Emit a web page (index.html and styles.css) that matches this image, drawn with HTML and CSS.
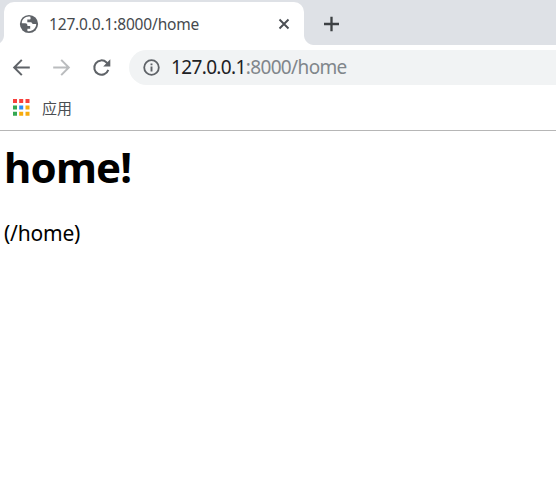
FILE: index.html
```html
<!DOCTYPE html>
<html lang="zh-CN">
<head>
<meta charset="utf-8">
<title>127.0.0.1:8000/home</title>
<link rel="stylesheet" href="styles.css">
</head>
<body>
<header class="tabstrip">
  <div class="tab">
    <svg class="globe" width="20" height="20" viewBox="0 0 20 20"><circle cx="10" cy="10" r="9.1" fill="#5f6368"/><path d="M11.4 2.8c-4.4-1.1-8.6 2.3-8.6 6.5h3.4c1.4 0 2.2.8 2.2 2v.7h2.8v2.7H8.4v2.3c4.7 1 8.8-2.6 8.8-7h-2.5c-1.2 0-1.9-.7-2.3-1.8H8.3V5.6h2.2c.8 0 1.1-.5 1.1-1.2z" fill="#fff"/></svg>
    <span class="title">127.0.0.1:8000/home</span>
    <svg class="close" width="12" height="12" viewBox="0 0 12 12"><path d="M1.5 1.5l9 9M10.5 1.5l-9 9" stroke="#4b4f54" stroke-width="1.9"/></svg>
  </div>
  <svg class="plus" width="16" height="16" viewBox="0 0 16 16"><path d="M8.5 .8v14.4M1 8h15" stroke="#3c4043" stroke-width="2.3"/></svg>
</header>
<nav class="toolbar">
  <svg class="back" width="20" height="20" viewBox="0 0 20 20"><path d="M18.8 9.5H3.4M10.8 1.9L3.2 9.5l7.6 7.6" fill="none" stroke="#5f6368" stroke-width="2"/></svg>
  <svg class="forward" width="20" height="20" viewBox="0 0 20 20"><path d="M2.2 9.5H17.4M10.2 1.9l7.6 7.6-7.6 7.6" fill="none" stroke="#babcbe" stroke-width="2"/></svg>
  <svg class="reload" width="20" height="20" viewBox="0 0 20 20"><path d="M17.3 11.9A7.2 7.2 0 1 1 15.6 4.5l1.4 1.4" fill="none" stroke="#5f6368" stroke-width="2"/><path d="M19.3 1.3v7.1h-7.1z" fill="#5f6368"/></svg>
  <div class="omnibox">
    <svg class="info" width="18" height="18" viewBox="0 0 18 18"><circle cx="8.5" cy="8.5" r="7.3" fill="none" stroke="#5f6368" stroke-width="1.8"/><path d="M8.5 7.5v5M8.5 4.4v1.9" stroke="#5f6368" stroke-width="1.9"/></svg>
    <span class="url"><b>127.0.0.1</b>:8000/home</span>
  </div>
</nav>
<nav class="bookmarks">
  <svg class="apps" width="18" height="18" viewBox="0 0 18 18">
    <path d="M0 0h4v4H0zM6.2 0h4v4h-4zM12.5 0h4v4h-4z" fill="#f8403c"/>
    <path d="M0 6.5h4v4H0zM0 12.7h4v4H0z" fill="#34a853"/>
    <path d="M6.2 6.5h4v4h-4z" fill="#2a8cf5"/>
    <path d="M12.5 6.5h4v4h-4zM6.2 12.7h4v4h-4zM12.5 12.7h4v4h-4z" fill="#f7ab0c"/>
  </svg>
  <span class="label">应用</span>
</nav>
<main>
  <h1>home!</h1>
  <p>(/home)</p>
</main>
</body>
</html>
```
FILE: styles.css
```css
* { box-sizing: border-box; }
body { margin: 0; height: 492px; overflow: hidden; background: #fff; font-family: "Noto Sans", "Open Sans", "Noto Sans CJK SC", sans-serif; }
svg { display: block; flex: none; }
.tabstrip { display: flex; height: 45px; padding: 2px 0 0 4px; background: #dee1e6; }
.tab { position: relative; display: flex; align-items: center; width: 300px; height: 43px; padding: 0 14px 0 15px; background: #fff; border-radius: 10px 10px 0 0; }
.tab::before, .tab::after { content: ""; position: absolute; bottom: 0; width: 10px; height: 10px; }
.tab::before { right: 100%; background: radial-gradient(circle at 0 0, transparent 9.5px, #fff 10.5px); }
.tab::after { left: 100%; background: radial-gradient(circle at 100% 0, transparent 9.5px, #fff 10.5px); }
.title { margin: 0 auto 0 10px; font-size: 15.5px; line-height: 20px; letter-spacing: -.16px; color: #45494d; white-space: nowrap; }
.plus { margin: 14px 0 0 19px; }
.toolbar { display: flex; align-items: center; height: 45px; padding-left: 11px; }
.forward, .reload { margin-left: 20px; }
.omnibox { display: flex; align-items: center; flex: 1; height: 35px; margin-left: 18px; padding-left: 14px; border-radius: 18px 0 0 18px; background: #f1f3f4; }
.url { margin: -1px 0 0 10px; font-size: 19px; line-height: 24px; letter-spacing: -.64px; color: #80868b; white-space: nowrap; }
.url b { font-weight: 400; color: #202124; }
.bookmarks { display: flex; align-items: center; height: 41px; padding: 0 0 6px 13px; border-bottom: 1px solid #b6b6b6; }
.apps { margin-top: 1px; }
.label { margin: 2px 0 0 11px; font: 400 15px/20px "Noto Sans CJK SC", sans-serif; color: #4a4e52; }
main { padding: 7px 0 0 4px; }
h1 { margin: 0; font-size: 42px; line-height: 58px; letter-spacing: -.8px; font-weight: 700; color: #000; }
p { margin: 22px 0 0; font-size: 21px; line-height: 30px; letter-spacing: -.2px; color: #000; }
```
